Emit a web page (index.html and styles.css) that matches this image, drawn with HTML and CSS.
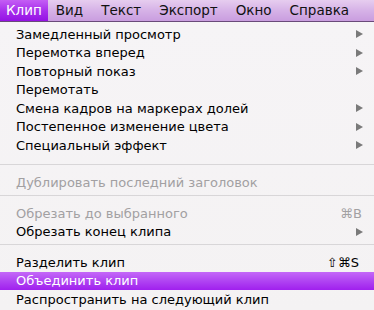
FILE: index.html
```html
<!DOCTYPE html>
<html lang="ru">
<head>
<meta charset="utf-8">
<link rel="stylesheet" href="styles.css">
</head>
<body>
<div class="screen">
  <div class="menubar">
    <span class="mb-item mb-active">Клип</span>
    <span class="mb-item">Вид</span>
    <span class="mb-item">Текст</span>
    <span class="mb-item">Экспорт</span>
    <span class="mb-item">Окно</span>
    <span class="mb-item">Справка</span>
  </div>
  <div class="menu">
    <div class="item"><span class="label">Замедленный просмотр</span><span class="arrow"></span></div>
    <div class="item"><span class="label">Перемотка вперед</span><span class="arrow"></span></div>
    <div class="item"><span class="label">Повторный показ</span><span class="arrow"></span></div>
    <div class="item"><span class="label">Перемотать</span></div>
    <div class="item"><span class="label">Смена кадров на маркерах долей</span><span class="arrow"></span></div>
    <div class="item"><span class="label">Постепенное изменение цвета</span><span class="arrow"></span></div>
    <div class="item"><span class="label">Специальный эффект</span><span class="arrow"></span></div>
    <div class="sep sep-first"></div>
    <div class="item disabled"><span class="label">Дублировать последний заголовок</span></div>
    <div class="sep"></div>
    <div class="item disabled"><span class="label">Обрезать до выбранного</span><span class="key">⌘B</span></div>
    <div class="item"><span class="label">Обрезать конец клипа</span><span class="arrow"></span></div>
    <div class="sep"></div>
    <div class="item"><span class="label">Разделить клип</span><span class="key key-wide">⇧⌘S</span></div>
    <div class="item selected"><span class="label">Объединить клип</span></div>
    <div class="item"><span class="label">Распространить на следующий клип</span></div>
  </div>
</div>
</body>
</html>
```
FILE: styles.css
```css
html, body {
  margin: 0;
  padding: 0;
}
body {
  width: 374px;
  height: 310px;
  overflow: hidden;
  font-family: "DejaVu Sans", "Liberation Sans", sans-serif;
  background: #f5f3f5;
}
.screen {
  display: flex;
  flex-direction: column;
  width: 374px;
  height: 310px;
}
.menubar {
  display: flex;
  height: 21px;
  border-bottom: 1px solid #6a4a7a;
  background: linear-gradient(to bottom, #e6cdef 0%, #d6b2e7 50%, #c99ddf 100%);
  font-size: 13.5px;
  color: #111;
}
.mb-item {
  display: flex;
  align-items: center;
  padding: 0 9px;
  line-height: 21px;
  white-space: nowrap;
}
.mb-active {
  padding: 0 6px 0 6px;
  margin-right: -1px;
  color: #fff;
  background: linear-gradient(to bottom, #c45ef4 0%, #a62cec 55%, #9412e4 100%);
}
.menu {
  display: flex;
  flex-direction: column;
  padding-top: 3px;
  background: linear-gradient(to bottom, #f6f4f6, #f4f2f3);
  flex: 1;
}
.item {
  display: flex;
  align-items: center;
  height: 18.5px;
  padding: 0 11px 0 16px;
  font-size: 13px;
  color: #000;
}
.label {
  flex: 1;
  white-space: nowrap;
}
.disabled {
  color: #a2a0a2;
}
.selected {
  color: #fff;
  background: linear-gradient(to bottom, #c468f8 0%, #b044f2 50%, #a020ee 100%);
}
.arrow {
  width: 0;
  height: 0;
  border-top: 4px solid transparent;
  border-bottom: 4px solid transparent;
  border-left: 7px solid #7a7a7a;
}
.key {
  font-size: 13px;
  margin-right: 1px;
}
.key-wide {
  margin-right: 4px;
  color: #000;
}
.sep {
  height: 12px;
  display: flex;
  flex-direction: column;
  justify-content: flex-start;
}
.sep::before {
  content: "";
  display: block;
  margin-top: 3px;
  height: 1px;
  background: #d8d6d8;
}
.sep-first {
  height: 19px;
}
.sep-first::before {
  margin-top: 9px;
}
```
